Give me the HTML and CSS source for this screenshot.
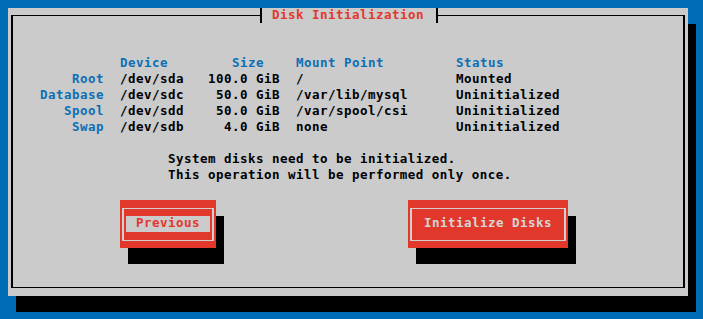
FILE: index.html
```html
<!DOCTYPE html>
<html>
<head>
<meta charset="utf-8">
<link rel="stylesheet" href="styles.css">
</head>
<body>
<div class="screen">
  <div class="window">
    <div class="title"><span class="title-text">Disk Initialization</span></div>
    <div class="frame">
      <div class="disks">
        <div class="hd c1"></div>
        <div class="hd c2">Device</div>
        <div class="hd c3 size-hd">Size</div>
        <div class="hd c4">Mount Point</div>
        <div class="hd c5">Status</div>

        <div class="lbl c1">Root</div>
        <div class="c2">/dev/sda</div>
        <div class="c3">100.0 GiB</div>
        <div class="c4">/</div>
        <div class="c5">Mounted</div>

        <div class="lbl c1">Database</div>
        <div class="c2">/dev/sdc</div>
        <div class="c3">50.0 GiB</div>
        <div class="c4">/var/lib/mysql</div>
        <div class="c5">Uninitialized</div>

        <div class="lbl c1">Spool</div>
        <div class="c2">/dev/sdd</div>
        <div class="c3">50.0 GiB</div>
        <div class="c4">/var/spool/csi</div>
        <div class="c5">Uninitialized</div>

        <div class="lbl c1">Swap</div>
        <div class="c2">/dev/sdb</div>
        <div class="c3">4.0 GiB</div>
        <div class="c4">none</div>
        <div class="c5">Uninitialized</div>
      </div>
      <div class="message">
        <div class="line">System disks need to be initialized.</div>
        <div class="line">This operation will be performed only once.</div>
      </div>
      <div class="buttons">
        <div class="button btn-prev">
          <div class="btn-outline"><span class="btn-label focused">Previous</span></div>
        </div>
        <div class="button btn-init">
          <div class="btn-outline"><span class="btn-label">Initialize Disks</span></div>
        </div>
      </div>
    </div>
  </div>
</div>
</body>
</html>
```

FILE: styles.css
```css
html, body {
  margin: 0;
  padding: 0;
}
body {
  background: #006cb7;
  width: 703px;
  height: 319px;
  overflow: hidden;
  font-family: "DejaVu Sans Mono", "Liberation Mono", monospace;
  font-weight: bold;
  font-size: 12.5px;
  letter-spacing: 0.47px;
  line-height: 16px;
  color: #000;
}
.screen {
  padding: 8px;
}
.window {
  position: relative;
  width: 680px;
  height: 288px;
  box-sizing: border-box;
  background: #cbcbcb;
  box-shadow: 8px 16px 0 #000;
  padding: 7px 3px 8px 3px;
}
.frame {
  height: 100%;
  box-sizing: border-box;
  border-top: 1px solid #000;
  border-bottom: 1px solid #000;
  border-left: 2px solid #000;
  border-right: 2px solid #000;
  padding-top: 40px;
}
.title {
  position: absolute;
  left: 252px;
  top: 0;
  height: 15px;
  border-left: 2px solid #000;
  border-right: 2px solid #000;
  background: #cbcbcb;
  padding: 0 12px 0 10px;
  line-height: 14px;
}
.title-text {
  color: #e2382c;
  white-space: pre;
}
.disks {
  display: grid;
  grid-template-columns: 96px 88px 72px 176px auto;
  margin-left: 11px;
}
.disks > div {
  height: 16px;
  line-height: 14px;
  padding-bottom: 2px;
  box-sizing: border-box;
  white-space: pre;
}
.hd {
  color: #0d6fb6;
}
.lbl {
  color: #0d6fb6;
}
.c1 {
  text-align: right;
  padding-right: 16px;
}
.c3 {
  text-align: right;
}
.size-hd {
  text-align: left;
  padding-left: 24px;
}
.c4 {
  padding-left: 16px;
}
.message {
  margin-top: 16px;
  margin-left: 155px;
}
.message .line {
  height: 16px;
  line-height: 14px;
  padding-bottom: 2px;
  box-sizing: border-box;
  white-space: pre;
}
.buttons {
  display: flex;
  margin-top: 16px;
  margin-left: 107px;
  gap: 192px;
}
.button {
  background: #e2382c;
  box-shadow: 8px 16px 0 #000;
  height: 48px;
  box-sizing: border-box;
  padding: 8px 2px 7px 2px;
}
.btn-prev {
  width: 96px;
}
.btn-init {
  width: 160px;
}
.btn-outline {
  height: 100%;
  box-sizing: border-box;
  border-top: 1px solid #d0d0d0;
  border-bottom: 1px solid #d0d0d0;
  border-left: 2px solid #d0d0d0;
  border-right: 2px solid #d0d0d0;
  padding: 7px 2px 0 2px;
  display: flex;
  align-items: flex-start;
}
.btn-label {
  display: block;
  flex: 1;
  height: 16px;
  line-height: 14px;
  padding-bottom: 2px;
  box-sizing: border-box;
  text-align: center;
  white-space: pre;
  color: #d6d6d6;
}
.btn-label.focused {
  background: #cbcbcb;
  color: #e2382c;
}
```
